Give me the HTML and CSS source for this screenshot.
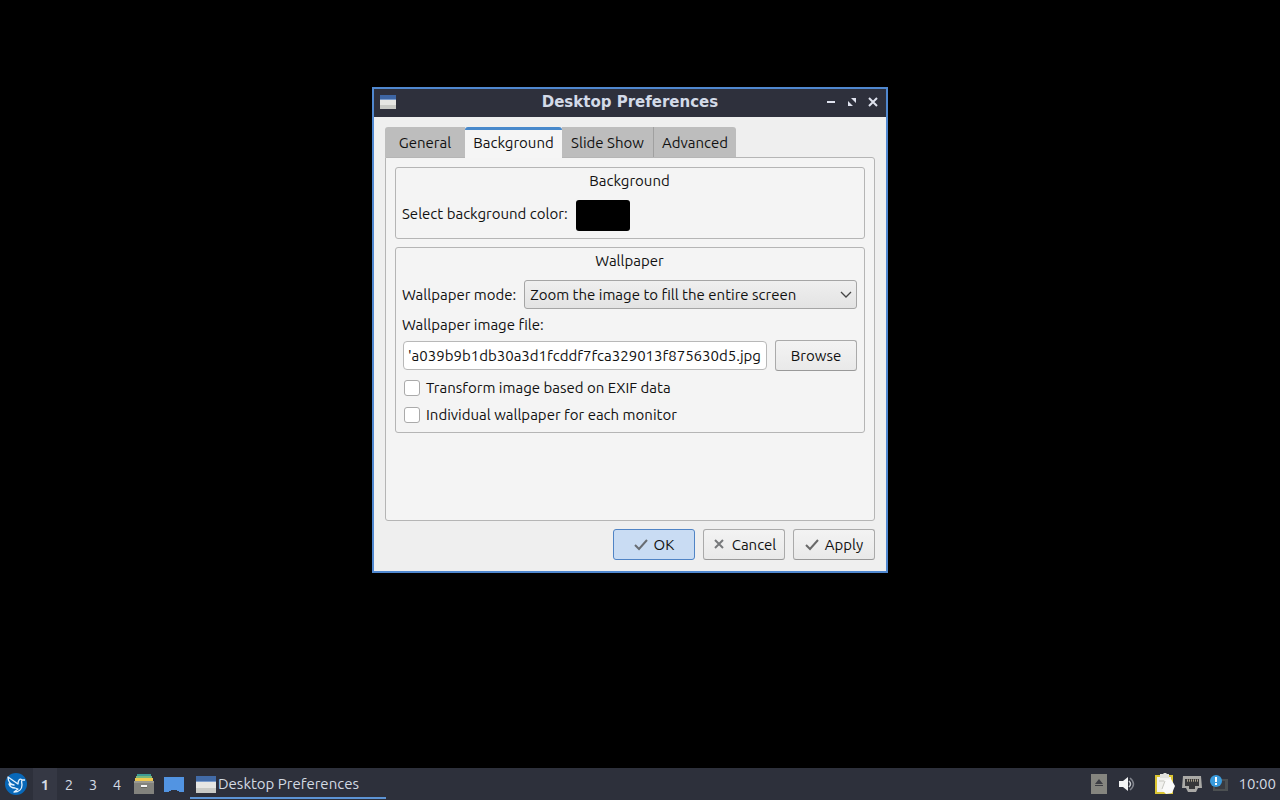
FILE: index.html
```html
<!DOCTYPE html>
<html lang="en">
<head>
<meta charset="utf-8">
<title>Desktop Preferences</title>
<link rel="stylesheet" href="styles.css">
</head>
<body>
<main class="desktop">
  <section class="window" aria-labelledby="window-title">
    <header class="titlebar">
      <svg class="app-icon" width="16" height="14" viewBox="0 0 16 14"><path fill="#c9cac6" d="M0 0h16v14H0z"/><path fill="#e6e6e3" d="M0 5h16v5H0z"/><path fill="#3e66a4" d="M0 0h16v4H0z"/><path fill="#7c9ccb" d="M0 4h16v1H0z"/></svg>
      <h1 class="title" id="window-title">Desktop Preferences</h1>
      <div class="window-controls">
        <button class="control" type="button" aria-label="Minimize"><svg width="10" height="10" viewBox="0 0 10 10"><path fill="#dfe2ee" d="M1 4h8v2H1z"/></svg></button>
        <button class="control" type="button" aria-label="Maximize"><svg width="10" height="10" viewBox="0 0 10 10"><path fill="#dfe2ee" d="M4 1h5v5zM1 4l5 5H1z"/></svg></button>
        <button class="control" type="button" aria-label="Close"><svg width="10" height="10" viewBox="0 0 10 10"><path stroke="#dfe2ee" stroke-width="2" d="m1 1 8 8M9 1 1 9"/></svg></button>
      </div>
    </header>
    <form class="content">
      <div class="tabs" role="tablist">
        <button class="tab tab-first" type="button" role="tab">General</button>
        <button class="tab tab-active" type="button" role="tab" aria-selected="true">Background</button>
        <button class="tab" type="button" role="tab">Slide Show</button>
        <button class="tab tab-last" type="button" role="tab">Advanced</button>
      </div>
      <div class="pane" role="tabpanel">
        <section class="group">
          <h2 class="group-title">Background</h2>
          <div class="row color-row">
            <label for="color">Select background color:</label>
            <button class="swatch" id="color" type="button" aria-label="Black"></button>
          </div>
        </section>
        <section class="group wallpaper">
          <h2 class="group-title">Wallpaper</h2>
          <div class="row">
            <label for="mode">Wallpaper mode:</label>
            <div class="select-wrap">
              <select class="select" id="mode"><option>Zoom the image to fill the entire screen</option></select>
              <svg class="chevron" width="12" height="8" viewBox="0 0 12 8"><path fill="none" stroke="#444" stroke-width="1.3" d="m1 1 5 5 5-5"/></svg>
            </div>
          </div>
          <label class="file-label" for="file">Wallpaper image file:</label>
          <div class="row file-row">
            <input class="file" id="file" type="text" value="'a039b9b1db30a3d1fcddf7fca329013f875630d5.jpg">
            <button class="button" type="button">Browse</button>
          </div>
          <label class="check"><input type="checkbox">Transform image based on EXIF data</label>
          <label class="check"><input type="checkbox">Individual wallpaper for each monitor</label>
        </section>
      </div>
      <div class="actions">
        <button class="button button-default" type="button"><svg width="14" height="14" viewBox="0 0 14 14"><path fill="none" stroke="#686d73" stroke-width="2" d="m1 7 4 4 8-9"/></svg>OK</button>
        <button class="button" type="button"><svg width="14" height="14" viewBox="0 0 14 14"><path stroke="#77797b" stroke-width="2" d="m3 2 8 8m0-8-8 8"/></svg>Cancel</button>
        <button class="button" type="button"><svg width="14" height="14" viewBox="0 0 14 14"><path fill="none" stroke="#696969" stroke-width="2" d="m1 7 4 4 8-9"/></svg>Apply</button>
      </div>
    </form>
  </section>
</main>
<footer class="panel">
  <button class="launcher" type="button" aria-label="Menu"><svg width="22" height="22" viewBox="0 0 22 22"><circle cx="11" cy="11" r="11" fill="#0868b9"/><path fill="none" stroke="#e5f3ff" stroke-width="1.3" stroke-linejoin="round" d="M20 7h-3c-2-2-4 0-4 4L3 4c0 4 2 7 6 8l-5-1c1 3 3 4 6 4l3 1-4 3c5 0 8-3 8-7 0-2-1-3 0-5"/></svg></button>
  <nav class="pager" aria-label="Desktops">
    <button class="page page-active" type="button">1</button>
    <button class="page" type="button">2</button>
    <button class="page" type="button">3</button>
    <button class="page" type="button">4</button>
  </nav>
  <button class="launcher files" type="button" aria-label="Files"><svg width="20" height="22" viewBox="0 0 20 22"><path fill="#3d9b94" d="M3 1h14v4H3z"/><path fill="#79b77b" d="M2 3h16v3H2z"/><path fill="#efc84e" d="M1 5h18v4H1z"/><path fill="#82827d" d="M0 8h20v13H0z"/><path fill="#999991" d="M0 8h20v2H0z"/><path fill="#f5f5f5" d="M7 12h6v2H7z"/><path fill="#66665f" d="M7 14h6v1H7z"/></svg></button>
  <button class="launcher show-desktop" type="button" aria-label="Show desktop"><svg width="20" height="18" viewBox="0 0 20 18"><path fill="#5294e2" d="M0 2h20v15h-5v-1h-2v-1H7v1H5v1H0z"/></svg></button>
  <button class="task" type="button"><svg width="20" height="17" viewBox="0 0 20 17"><path fill="#c9cac6" d="M0 0h20v17H0z"/><path fill="#e6e6e3" d="M0 6h20v6H0z"/><path fill="#426ba7" d="M0 0h20v5H0z"/><path fill="#7c9ccb" d="M0 5h20v1H0z"/></svg>Desktop Preferences</button>
  <div class="tray">
    <svg width="16" height="20" viewBox="0 0 16 20"><path fill="#85857f" d="M0 0h16v20H0z"/><path fill="#3c3d43" d="m8 5 4 5H4zM4 11h8v1H4z"/></svg>
    <svg class="volume" width="16" height="16" viewBox="0 0 16 16"><path fill="#f3f4f5" d="M0 5h4l5-4v14l-5-4H0z"/><path fill="none" stroke="#c7cad0" stroke-width="1.5" d="M10 5q3 3 0 6"/><path fill="none" stroke="#81848d" stroke-width="1.5" d="M11 2q7 6 0 12"/></svg>
    <svg class="clipboard" width="21" height="22" viewBox="0 0 21 22"><path fill="#dbc532" d="M0 2h18v19H0z"/><path fill="#f1f1ee" d="M2 4h14v15H2z"/><path fill="#e1e1dd" d="M5 1h3l1-1h2l1 1h2v4H5z"/><path fill="#fafafa" d="m10 7 6-1 4 7-3 7-6 1-4-4z"/><path fill="none" stroke="#c8c8c2" d="m10 8-3 8M4 8h5"/></svg>
    <svg class="network" width="20" height="18" viewBox="0 0 20 18"><path fill="#aaa9a6" d="M1 1h18l1 12h-4l-2 4H6l-2-4H0z"/><path fill="#37373a" d="M3 4h14v7h-4v3H7v-3H3z"/><path stroke="#d6c9aa" stroke-dasharray="1 1" d="M5 5h11M5 6h11"/></svg>
    <svg class="notice" width="18" height="18" viewBox="0 0 18 18"><path fill="#4c5052" d="M3 4h15v12H3z"/><path fill="#383b41" d="M5 6h10v8H5z"/><circle cx="6" cy="6" r="6" fill="#399bdd"/><path fill="#fff" d="M5 2h2v5H5zM5 8h2v2H5z"/></svg>
    <time class="clock">10:00</time>
  </div>
</footer>
</body>
</html>
```
FILE: styles.css
```css
* { box-sizing: border-box; }

body {
  display: flex;
  flex-direction: column;
  min-height: 100vh;
  margin: 0;
  background: #000;
  color: #111;
  font: 15px/20px Ubuntu, "Noto Sans", sans-serif;
}

button, input, select { margin: 0; color: inherit; font: inherit; }
button { padding: 0; border: 0; background: none; }
svg { display: block; flex: none; }

.desktop { position: relative; flex: 1; }

.window {
  position: absolute;
  top: 87px;
  left: 372px;
  width: 516px;
  border: 2px solid #5088d0;
  background: #efefef;
}

.titlebar {
  display: flex;
  align-items: center;
  height: 28px;
  padding: 0 6px 2px;
  background: #2e303c;
}

.title {
  flex: 1;
  margin: 0;
  padding-left: 38px;
  color: #d3dae8;
  font: bold 15px/20px "DejaVu Sans", sans-serif;
  text-align: center;
}

.window-controls { display: flex; gap: 11px; padding-right: 2px; }

.content { padding: 10px 11px 11px; }
.tabs { display: flex; height: 31px; position: relative; z-index: 1; }

.tab {
  width: 91px;
  height: 30px;
  padding-top: 1px;
  background: #bdbdbd;
  text-align: center;
}
.tab-first { width: 80px; border-radius: 3px 0 0 0; }
.tab-active {
  width: 97px;
  height: 31px;
  padding: 0 0 2px;
  border-top: 3px solid #4788cb;
  border-radius: 3px 3px 0 0;
  background: #f5f5f5;
}
.tab-last { width: 83px; border-left: 1px solid #a0a0a0; border-radius: 0 3px 0 0; }

.pane {
  min-height: 364px;
  margin-top: -1px;
  padding: 9px;
  border: 1px solid #b5b5b5;
  border-radius: 0 3px 3px 3px;
  background: #f4f4f4;
}

.group {
  padding: 3px 7px 7px 6px;
  border: 1px solid #b5b5b5;
  border-radius: 3px;
}
.group-title { margin: 0; font: inherit; text-align: center; }
.row { display: flex; align-items: center; gap: 8px; }
.color-row { margin-top: 9px; }
.color-row label { padding-bottom: 3px; }
.swatch { width: 54px; height: 31px; border-radius: 3px; background: #000; }

.wallpaper { margin-top: 8px; padding-bottom: 7px; }
.wallpaper .row { margin-top: 9px; }
.select-wrap { position: relative; flex: 1; }
.select {
  appearance: none;
  display: block;
  width: 100%;
  height: 29px;
  padding: 0 24px 0 5px;
  border: 1px solid #a5a5a5;
  border-radius: 3px;
  background: linear-gradient(#efefef, #e3e3e3);
}
.chevron { position: absolute; top: 11px; right: 5px; pointer-events: none; }
.file-label { display: block; margin-top: 6px; }
.wallpaper .file-row { margin-top: 5px; padding-left: 1px; }
.file {
  flex: 1;
  min-width: 0;
  height: 29px;
  padding: 0 4px;
  border: 1px solid #b8b8b8;
  border-radius: 4px;
  background: #fff;
}

.button {
  display: flex;
  align-items: center;
  justify-content: center;
  gap: 6px;
  width: 82px;
  height: 31px;
  border: 1px solid #aaa;
  border-bottom-color: #999;
  border-radius: 3px;
  background: linear-gradient(#f3f3f3, #e9e9e9);
}
.button-default { border-color: #5084c5; background: #c9dcf3; }

.check { display: flex; align-items: center; gap: 6px; width: max-content; margin: 7px 0 0 2px; }
.check input {
  appearance: none;
  width: 16px;
  height: 16px;
  border: 1px solid #aaa;
  border-radius: 3px;
  background: #fff;
}

.actions { display: flex; justify-content: flex-end; gap: 8px; margin-top: 8px; }

.panel {
  display: flex;
  align-items: center;
  height: 32px;
  padding: 0 4px 0 5px;
  background: #2d303b;
  color: #d3dae3;
}
.pager { display: flex; margin: 0 5px 0 6px; }
.page { width: 24px; height: 32px; padding-top: 1px; }
.page-active { background: #353844; font-weight: bold; }
.show-desktop { margin: 0 6px 0 10px; }
.task {
  display: flex;
  align-items: center;
  gap: 2px;
  width: 196px;
  height: 30px;
  padding: 2px 6px 0;
  border-bottom: 2px solid #5d94d5;
  white-space: nowrap;
}
.tray { display: flex; align-items: center; margin-left: auto; }
.volume { margin-left: 12px; }
.clipboard { margin-left: 20px; }
.network { margin-left: 6px; }
.notice { margin-left: 8px; }
.clock { margin-left: 10px; }
```
